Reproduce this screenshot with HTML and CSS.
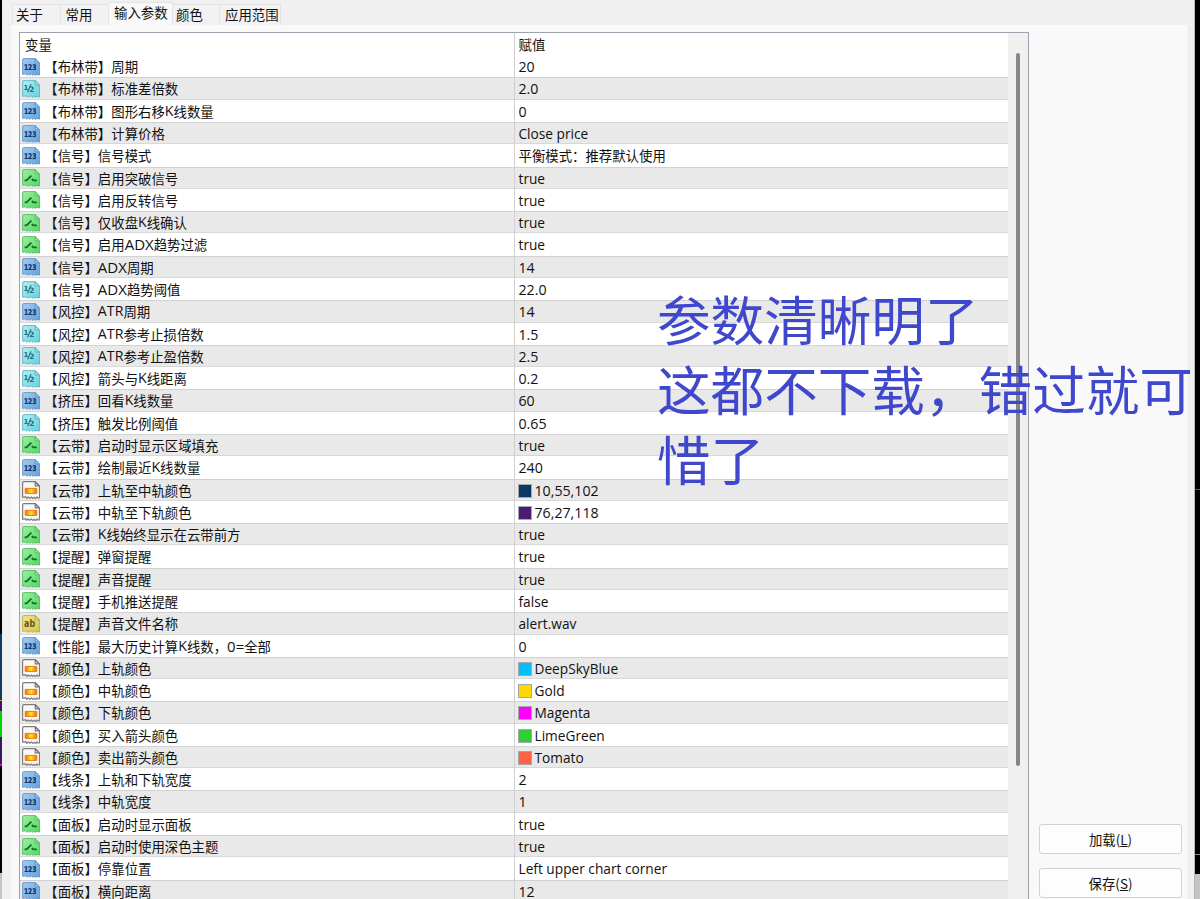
FILE: index.html
```html
<!DOCTYPE html>
<html lang="zh-CN">
<head>
<meta charset="utf-8">
<title>输入参数</title>
<link rel="stylesheet" href="styles.css">
</head>
<body>
<svg class="defs" width="0" height="0" aria-hidden="true">
  <defs>
    <linearGradient id="gb" x1="0" y1="0" x2="1" y2="1"><stop offset="0" stop-color="#a3cdf2"/><stop offset="1" stop-color="#64a0de"/></linearGradient>
    <linearGradient id="gc" x1="0" y1="0" x2="1" y2="1"><stop offset="0" stop-color="#b4f0f4"/><stop offset="1" stop-color="#62cfdc"/></linearGradient>
    <linearGradient id="gg" x1="0" y1="0" x2="1" y2="1"><stop offset="0" stop-color="#9cf0a0"/><stop offset="1" stop-color="#50d862"/></linearGradient>
    <linearGradient id="gy" x1="0" y1="0" x2="1" y2="1"><stop offset="0" stop-color="#f1e793"/><stop offset="1" stop-color="#d5c34c"/></linearGradient>
    <linearGradient id="go" x1="0" y1="0" x2="1" y2="0"><stop offset="0" stop-color="#f26a00"/><stop offset=".5" stop-color="#ffe52e"/><stop offset="1" stop-color="#f26a00"/></linearGradient>
    <path id="page" d="M.6 1.9Q.6.6 1.9.6H13.2L17.5 4.9V17H16L15 16 13.6 17.6 12.2 16.2 10.8 17.4 9.4 16 7.8 17.2 6.2 16 4.8 17.3 3.6 15.6 2.2 16.2H.6Z"/>
    <path id="fold" d="M13.2.8V4.9H17.3Z"/>
    <symbol id="int" viewBox="0 0 18 18"><use href="#page" fill="url(#gb)" stroke="#6496ca" stroke-width=".9"/><use href="#fold" fill="#a5cdf2" stroke="#5c8fc4" stroke-width=".9"/><text x="8.2" y="12.3" text-anchor="middle" font-family="DejaVu Sans" font-weight="700" font-size="7.8" textLength="12.6" lengthAdjust="spacingAndGlyphs" fill="#0c356b" stroke="#0c356b" stroke-width=".2">123</text></symbol>
    <symbol id="dbl" viewBox="0 0 18 18"><use href="#page" fill="url(#gc)" stroke="#5fb6c2" stroke-width=".9"/><use href="#fold" fill="#b5eef2" stroke="#57acb9" stroke-width=".9"/><text x="1.6" y="9.8" font-family="DejaVu Sans" font-weight="700" font-size="7" fill="#24727f">1</text><path d="M9 4.2 5.6 12.2" stroke="#24727f" stroke-width="1.1" fill="none"/><text x="7.2" y="12.4" font-family="DejaVu Sans" font-weight="700" font-size="7.4" fill="#24727f">2</text></symbol>
    <symbol id="bool" viewBox="0 0 18 18"><use href="#page" fill="url(#gg)" stroke="#55bd62" stroke-width=".9"/><use href="#fold" fill="#a6f0aa" stroke="#4db45b" stroke-width=".9"/><path d="M2.6 11.4H4.6L9.4 6.6M9.8 10 11.4 11.4H14.8" stroke="#14692a" stroke-width="1.7" fill="none"/></symbol>
    <symbol id="str" viewBox="0 0 18 18"><use href="#page" fill="url(#gy)" stroke="#b9a94a" stroke-width=".9"/><use href="#fold" fill="#efe694" stroke="#b3a343" stroke-width=".9"/><text x="7.6" y="12.4" text-anchor="middle" font-family="DejaVu Sans" font-weight="700" font-size="9.6" textLength="11" lengthAdjust="spacingAndGlyphs" fill="#655815">ab</text></symbol>
    <symbol id="clr" viewBox="0 0 18 18"><use href="#page" fill="#f8f8f8" stroke="#7c7c7c" stroke-width="1.2"/><use href="#fold" fill="#ddd" stroke="#777" stroke-width="1.1"/><path d="M3.2 7.4H14.8V12.4H3.2Z" fill="url(#go)" stroke="#f07a10" stroke-width="1"/></symbol>
  </defs>
</svg>

<div class="desktop">
  <div class="edge-left"></div>
  <div class="dialog">
    <nav class="tabs">
      <span class="tab t1">关于</span><span class="tab t2">常用</span><span class="tab t3 active">输入参数</span><span class="tab t4">颜色</span><span class="tab t5">应用范围</span>
    </nav>
    <main class="panel">
      <section class="list">
        <div class="table">
          <div class="head"><span class="name">变量</span><span class="value">赋值</span></div>
          <div class="row"><span class="name"><svg><use href="#int"/></svg>【布林带】周期</span><span class="value num">20</span></div>
          <div class="row"><span class="name"><svg><use href="#dbl"/></svg>【布林带】标准差倍数</span><span class="value num">2.0</span></div>
          <div class="row"><span class="name"><svg><use href="#int"/></svg>【布林带】图形右移<i>K</i>线数量</span><span class="value num">0</span></div>
          <div class="row"><span class="name"><svg><use href="#int"/></svg>【布林带】计算价格</span><span class="value">Close price</span></div>
          <div class="row"><span class="name"><svg><use href="#int"/></svg>【信号】信号模式</span><span class="value zh">平衡模式：推荐默认使用</span></div>
          <div class="row"><span class="name"><svg><use href="#bool"/></svg>【信号】启用突破信号</span><span class="value">true</span></div>
          <div class="row"><span class="name"><svg><use href="#bool"/></svg>【信号】启用反转信号</span><span class="value">true</span></div>
          <div class="row"><span class="name"><svg><use href="#bool"/></svg>【信号】仅收盘<i>K</i>线确认</span><span class="value">true</span></div>
          <div class="row"><span class="name"><svg><use href="#bool"/></svg>【信号】启用<i class="wide">ADX</i>趋势过滤</span><span class="value">true</span></div>
          <div class="row"><span class="name"><svg><use href="#int"/></svg>【信号】<i class="wide">ADX</i>周期</span><span class="value num">14</span></div>
          <div class="row"><span class="name"><svg><use href="#dbl"/></svg>【信号】<i class="wide">ADX</i>趋势阈值</span><span class="value num">22.0</span></div>
          <div class="row"><span class="name"><svg><use href="#int"/></svg>【风控】<i>ATR</i>周期</span><span class="value num">14</span></div>
          <div class="row"><span class="name"><svg><use href="#dbl"/></svg>【风控】<i>ATR</i>参考止损倍数</span><span class="value num">1.5</span></div>
          <div class="row"><span class="name"><svg><use href="#dbl"/></svg>【风控】<i>ATR</i>参考止盈倍数</span><span class="value num">2.5</span></div>
          <div class="row"><span class="name"><svg><use href="#dbl"/></svg>【风控】箭头与<i>K</i>线距离</span><span class="value num">0.2</span></div>
          <div class="row"><span class="name"><svg><use href="#int"/></svg>【挤压】回看<i>K</i>线数量</span><span class="value num">60</span></div>
          <div class="row"><span class="name"><svg><use href="#dbl"/></svg>【挤压】触发比例阈值</span><span class="value num">0.65</span></div>
          <div class="row"><span class="name"><svg><use href="#bool"/></svg>【云带】启动时显示区域填充</span><span class="value">true</span></div>
          <div class="row"><span class="name"><svg><use href="#int"/></svg>【云带】绘制最近<i>K</i>线数量</span><span class="value num">240</span></div>
          <div class="row"><span class="name"><svg><use href="#clr"/></svg>【云带】上轨至中轨颜色</span><span class="value num"><b class="navy"></b>10,55,102</span></div>
          <div class="row"><span class="name"><svg><use href="#clr"/></svg>【云带】中轨至下轨颜色</span><span class="value num"><b class="purple"></b>76,27,118</span></div>
          <div class="row"><span class="name"><svg><use href="#bool"/></svg>【云带】<i>K</i>线始终显示在云带前方</span><span class="value">true</span></div>
          <div class="row"><span class="name"><svg><use href="#bool"/></svg>【提醒】弹窗提醒</span><span class="value">true</span></div>
          <div class="row"><span class="name"><svg><use href="#bool"/></svg>【提醒】声音提醒</span><span class="value">true</span></div>
          <div class="row"><span class="name"><svg><use href="#bool"/></svg>【提醒】手机推送提醒</span><span class="value">false</span></div>
          <div class="row"><span class="name"><svg><use href="#str"/></svg>【提醒】声音文件名称</span><span class="value">alert.wav</span></div>
          <div class="row"><span class="name"><svg><use href="#int"/></svg>【性能】最大历史计算<i>K</i>线数，<i class="wide">0=</i>全部</span><span class="value num">0</span></div>
          <div class="row"><span class="name"><svg><use href="#clr"/></svg>【颜色】上轨颜色</span><span class="value"><b class="sky"></b>DeepSkyBlue</span></div>
          <div class="row"><span class="name"><svg><use href="#clr"/></svg>【颜色】中轨颜色</span><span class="value"><b class="gold"></b>Gold</span></div>
          <div class="row"><span class="name"><svg><use href="#clr"/></svg>【颜色】下轨颜色</span><span class="value"><b class="magenta"></b>Magenta</span></div>
          <div class="row"><span class="name"><svg><use href="#clr"/></svg>【颜色】买入箭头颜色</span><span class="value"><b class="lime"></b>LimeGreen</span></div>
          <div class="row"><span class="name"><svg><use href="#clr"/></svg>【颜色】卖出箭头颜色</span><span class="value"><b class="tomato"></b>Tomato</span></div>
          <div class="row"><span class="name"><svg><use href="#int"/></svg>【线条】上轨和下轨宽度</span><span class="value num">2</span></div>
          <div class="row"><span class="name"><svg><use href="#int"/></svg>【线条】中轨宽度</span><span class="value num">1</span></div>
          <div class="row"><span class="name"><svg><use href="#bool"/></svg>【面板】启动时显示面板</span><span class="value">true</span></div>
          <div class="row"><span class="name"><svg><use href="#bool"/></svg>【面板】启动时使用深色主题</span><span class="value">true</span></div>
          <div class="row"><span class="name"><svg><use href="#int"/></svg>【面板】停靠位置</span><span class="value">Left upper chart corner</span></div>
          <div class="row"><span class="name"><svg><use href="#int"/></svg>【面板】横向距离</span><span class="value num">12</span></div>
        </div>
        <div class="scroll"><div class="thumb"></div></div>
      </section>
      <aside class="actions">
        <button>加载(<u>L</u>)</button>
        <button>保存(<u>S</u>)</button>
      </aside>
    </main>
  </div>
  <div class="edge-right"></div>
  <p class="caption">参数清晰明了<br>这都不下载，错过就可<br>惜了</p>
</div>
</body>
</html>
```
FILE: styles.css
```css
* { box-sizing: border-box; }

body {
  margin: 0;
  overflow: hidden;
  font-family: "Noto Sans CJK SC", sans-serif;
  font-size: 13.4px;
  color: #111;
}

.defs { position: absolute; }

.desktop {
  position: relative;
  display: flex;
  width: 1200px;
  height: 899px;
  overflow: hidden;
}

.edge-left {
  width: 2px;
  background: linear-gradient(#000 0 634px, #123a60 634px 700px, #c9a21a 700px 701px, #3c1660 701px 711px, #00d400 711px 737px, #3c1660 737px 764px, #e000e0 764px 766px, #000 766px 873px, #c4c4c4 873px);
}

.edge-right {
  width: 5px;
  background: linear-gradient(#000 0 489px, #555 489px 490px, #000 490px 854px, #888 854px 855px, #000 855px 874px, #c4c4c4 874px);
}

.dialog {
  display: flex;
  flex-direction: column;
  width: 1193px;
  padding: 0 5px 0 9px;
  background: #f0f0f0;
  border-right: 1px solid #b5b5b5;
}

.tabs {
  display: flex;
  align-items: flex-end;
  height: 25px;
  padding-left: 1px;
}

.tab {
  height: 21px;
  line-height: 18px;
  padding-left: 5px;
  border: solid #e4e4e4;
  border-width: 1px 1px 0 0;
  background: #f2f2f2;
  white-space: nowrap;
}

.t1 { width: 49px; border-left-width: 1px; padding-left: 3px; }
.t2 { width: 48px; padding-left: 4.5px; }
.t3 { width: 64px; }
.t4 { width: 47px; padding-left: 3px; }
.t5 { width: 61px; }

.tab.active {
  height: 23px;
  line-height: 19px;
  background: #f9f9f9;
}

.panel {
  display: flex;
  flex: 1;
  min-height: 0;
  padding: 7px 7px 0 8px;
  background: #f9f9f9;
  border: solid #e8e8e8;
  border-width: 0 1px 0 0;
}

.list {
  display: flex;
  flex: none;
  width: 1010px;
  overflow: hidden;
  background: #fff;
  border: 1px solid #9ea2ac;
  border-bottom: 0;
}

.table { flex: none; width: 988px; }

.head, .row { display: flex; }

.head { height: 22.2px; line-height: 22px; }

.row { height: 22.29px; line-height: 22.6px; }

.row:nth-child(odd) {
  background: #e9e9e9;
  box-shadow: inset 0 1px #d2d2d2, inset 0 -1px #d8d8d8;
}

.name {
  display: flex;
  width: 495px;
  border-right: 1px solid #d0d0d0;
  white-space: nowrap;
}

.head .name { padding-left: 5px; }

.name svg {
  width: 18px;
  height: 18px;
  margin: 2.5px 4.3px 0 2px;
}

.name i {
  font: normal 14.2px/22.6px "Open Sans", sans-serif;
}

.name .wide { font-size: 15px; }

.value {
  padding-left: 3.5px;
  font-family: "Open Sans", "Noto Sans CJK SC", sans-serif;
  font-size: 13.7px;
  white-space: nowrap;
}

.row .value { line-height: 24px; }

.num { font-size: 14.2px; }

.head .value, .row .zh {
  font-family: "Noto Sans CJK SC", sans-serif;
  font-size: 13.4px;
}

.row .zh { line-height: 22.6px; }

.value b {
  display: inline-block;
  width: 14px;
  height: 14px;
  margin: 0 2.5px 0 -.5px;
  vertical-align: -2px;
  border: 1px solid #a8a8a8;
}

.navy { background: #0a3766; }
.purple { background: #4c1b76; }
.sky { background: #00bfff; }
.gold { background: #ffd700; }
.magenta { background: #f0f; }
.lime { background: #32cd32; }
.tomato { background: #ff6347; }

.scroll {
  flex: none;
  width: 20px;
  padding: 20px 0 0 8px;
  background: #f0f0f0;
}

.thumb {
  width: 4px;
  height: 713px;
  border-radius: 2px;
  background: #868686;
}

.actions {
  display: flex;
  flex: none;
  flex-direction: column;
  gap: 14px;
  width: 153px;
  padding: 792px 0 0 10px;
}

.actions button {
  flex: none;
  width: 143px;
  height: 30px;
  padding: 0 0 1px;
  font: 13.4px "Noto Sans CJK SC", sans-serif;
  color: #111;
  background: #fdfdfd;
  border: 1px solid #d2d2d2;
  border-radius: 3px;
}

.caption {
  position: absolute;
  left: 657px;
  top: 282.5px;
  margin: 0;
  font-size: 53.6px;
  line-height: 70px;
  color: #3f48cc;
  white-space: nowrap;
}
```
